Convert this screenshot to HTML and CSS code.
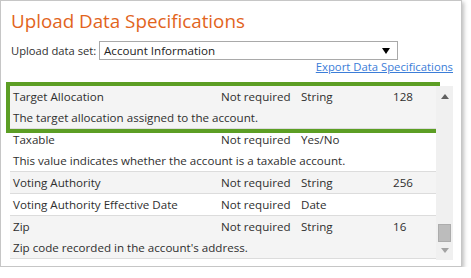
FILE: index.html
```html
<!DOCTYPE html>
<html lang="en">
<head>
    <meta charset="UTF-8">
    <title>Upload Data Specifications</title>
    <link rel="stylesheet" href="styles.css">
</head>
<body>

<div class="panel">
    <h1 class="title">Upload Data Specifications</h1>

    <div class="dataset">
        <span class="dataset-label">Upload data set:</span>
        <div class="select">
            <span>Account Information</span>
            <svg class="select-arrow" width="8" height="6" viewBox="0 0 8 6"><path d="M0 0h8L4 6z" fill="#000"/></svg>
        </div>
    </div>

    <div class="export">
        <a href="#">Export Data Specifications</a>
    </div>

    <div class="spec-list">
        <div class="rows">
            <div class="row odd highlight">
                <span>Target Allocation</span>
                <span>Not required</span>
                <span>String</span>
                <span>128</span>
                <span class="desc">The target allocation assigned to the account.</span>
            </div>
            <div class="row">
                <span>Taxable</span>
                <span>Not required</span>
                <span>Yes/No</span>
                <span></span>
                <span class="desc">This value indicates whether the account is a taxable account.</span>
            </div>
            <div class="row odd">
                <span>Voting Authority</span>
                <span>Not required</span>
                <span>String</span>
                <span>256</span>
            </div>
            <div class="row">
                <span>Voting Authority Effective Date</span>
                <span>Not required</span>
                <span>Date</span>
                <span></span>
            </div>
            <div class="row odd">
                <span>Zip</span>
                <span>Not required</span>
                <span>String</span>
                <span>16</span>
                <span class="desc">Zip code recorded in the account's address.</span>
            </div>
        </div>
        <div class="scrollbar">
            <svg class="scroll-up" width="8" height="5" viewBox="0 0 8 5"><path d="M0 5h8L4 0z" fill="#606060"/></svg>
            <div class="thumb"></div>
            <svg class="scroll-down" width="8" height="5" viewBox="0 0 8 5"><path d="M0 0h8L4 5z" fill="#a3a3a3"/></svg>
        </div>
    </div>
</div>

</body>
</html>
```

FILE: styles.css
```css
/* Estilos básicos */
body {
    margin: 0;
    background: #ffffff;
    font-family: 'Open Sans', sans-serif;
    font-size: 11.6px;
    color: #2f2f2f;
}
.panel {
    width: 443px;
    height: 265px;
    padding: 0 8px 0 9px;
    border: 1px solid #c6c6c6;
    box-shadow: 2px 2px 4px rgba(0, 0, 0, 0.25);
    overflow: hidden;
}
.title {
    margin: 7px 0 0 1px;
    font-size: 18.8px;
    font-weight: 400;
    line-height: 26px;
    color: #e2641c;
}
.dataset {
    display: flex;
    align-items: center;
    margin-top: 7px;
    white-space: nowrap;
}
.dataset-label {
    width: 88px;
    margin-left: 1px;
    font-size: 11.2px;
}
.select {
    display: flex;
    justify-content: space-between;
    align-items: center;
    box-sizing: border-box;
    width: 299px;
    height: 19px;
    padding: 0 7px 0 4px;
    border: 1px solid #a9a9a9;
    color: #222;
}
.export {
    text-align: right;
    margin-top: -1px;
    font-size: 11.3px;
    line-height: 16px;
}
.export a {
    color: #3b7dd8;
}
.spec-list {
    display: flex;
    margin-top: 11px;
    height: 174px;
}
.rows {
    width: 426px;
}
.row {
    display: grid;
    grid-template-columns: 208px 80px 92px 1fr;
    padding-left: 3px;
    line-height: 21px;
    border-bottom: 1px solid #dcdcdc;
    background: #ffffff;
}
.row.odd {
    background: #f4f4f4;
}
.row .desc {
    grid-column: 1 / -1;
}
.row.highlight {
    outline: 4px solid #5c9e24;
}
.scrollbar {
    display: flex;
    flex-direction: column;
    align-items: center;
    width: 17px;
    background: #f0f0f0;
}
.scroll-up {
    margin-top: 8px;
}
.thumb {
    width: 11px;
    height: 16px;
    margin-top: auto;
    background: #bcbcbc;
    border: 1px solid #acacac;
}
.scroll-down {
    margin: 6px 0 7px;
}
```
